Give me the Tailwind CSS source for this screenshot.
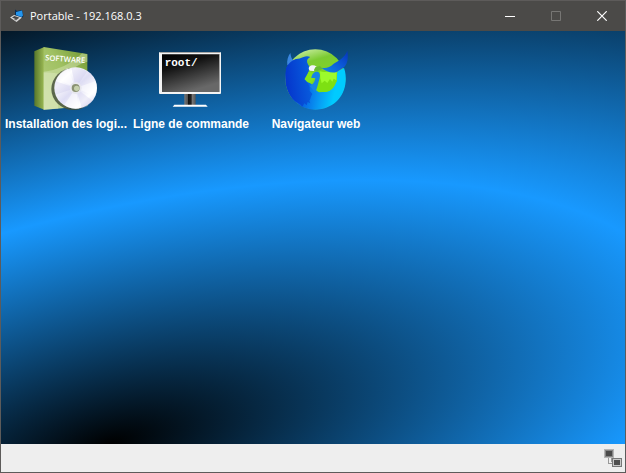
<!DOCTYPE html>
<html lang="fr">
<head>
    <meta charset="UTF-8">
    <meta name="viewport" content="width=device-width, initial-scale=1.0">
    <script src="https://cdn.jsdelivr.net/npm/@tailwindcss/browser@4"></script>
    <title>Portable - 192.168.0.3</title>
</head>
<body class="bg-[#4b4a48]">
    <div class="min-h-screen flex flex-col border border-[#5d5b5a]">
        <!-- Title bar -->
        <header class="h-[30px] flex items-center bg-[#4b4a48] text-white">
            <svg class="w-4 h-4 ml-2 shrink-0" viewBox="0 0 16 16" aria-hidden="true">
                <path d="M6 1.500L8 3l5-1 1.500 6-1.500 2-7-2.500z" fill="#0b2f55"/>
                <path d="M7 4l6-1.500 1 5L12.500 9 7 7z" fill="#2395ee"/>
                <path d="M1 9.500L5 7l8 2.500L7.500 14z" fill="#d7d7d7"/>
                <path d="M3 9.500L5.500 8l5 1.700L7.500 11.500z" fill="#454545"/>
                <path d="M5 11.500l2-1 1.500.7-1.500 1.200z" fill="#666"/>
            </svg>
            <h1 class="flex-1 ml-[5px] text-[11px] leading-4 font-['Open_Sans',sans-serif]">Portable - 192.168.0.3</h1>
            <button class="w-[46px] h-full flex items-center justify-center hover:bg-white/10" aria-label="Réduire">
                <svg class="w-[10px] h-[10px]" viewBox="0 0 10 10" shape-rendering="crispEdges"><path d="M0 5h10v1H0z" fill="#fff"/></svg>
            </button>
            <button class="w-[46px] h-full flex items-center justify-center" aria-label="Agrandir" disabled>
                <svg class="w-[10px] h-[10px]" viewBox="0 0 10 10"><path d="M.5.5h9v9h-9z" fill="none" stroke="#777674"/></svg>
            </button>
            <button class="w-[46px] h-full flex items-center justify-center hover:bg-red-600" aria-label="Fermer">
                <svg class="w-[10px] h-[10px]" viewBox="0 0 10 10"><path d="M.3.3l9.400 9.400M9.700.3L.3 9.700" stroke="#fff" stroke-width="1.200"/></svg>
            </button>
        </header>

        <!-- Desktop -->
        <main class="relative flex-1">
            <svg class="absolute inset-0 w-full h-full" viewBox="0 0 624 413" preserveAspectRatio="none" aria-hidden="true">
                <defs>
                    <radialGradient id="wallpaper" gradientUnits="userSpaceOnUse" cx="0" cy="0" r="1" gradientTransform="matrix(516 0 255 -264 109 413)" spreadMethod="reflect">
                        <stop offset="0" stop-color="#000"/>
                        <stop offset="1" stop-color="#1899ff"/>
                    </radialGradient>
                </defs>
                <path d="M0 0h624v413H0z" fill="url(#wallpaper)"/>
            </svg>

            <div class="relative flex flex-wrap gap-[5px] px-[5px] pt-[15px] font-['Liberation_Sans',Arial,sans-serif] text-[12px] leading-4 font-bold text-white">
                <button class="w-[120px] flex flex-col items-center gap-[6px] whitespace-nowrap">
                    <svg class="w-16 h-16" viewBox="102 30 192 192" aria-hidden="true">
                        <defs>
                            <linearGradient id="spine"><stop offset="0" stop-color="#58772a"/><stop offset="1" stop-color="#9dbb55"/></linearGradient>
                            <linearGradient id="front" x1="0" y1="1" x2="1" y2="0"><stop offset="0" stop-color="#b8cf83"/><stop offset=".55" stop-color="#a0c162"/><stop offset="1" stop-color="#6d942d"/></linearGradient>
                            <linearGradient id="disc" x1="0" y1="0" x2="1" y2="1"><stop offset="0" stop-color="#d7d5ee"/><stop offset=".25" stop-color="#fff"/><stop offset=".5" stop-color="#deddf4"/><stop offset=".75" stop-color="#fff"/><stop offset="1" stop-color="#cccae9"/></linearGradient>
                        </defs>
                        <path d="M103 46l30-13v188l-30-12z" fill="url(#spine)"/>
                        <path d="M131 33l131 21v156l-131 11z" fill="url(#front)"/>
                        <path d="M131 107c35-2 85-23 115-55l16 3v22c-45 12-75 45-84 92-5 20-5 38-3 49l-44 3z" fill="#dce9bd" opacity=".45"/>
                        <path d="M131 110c35-3 70 8 131 32v69l-131 10z" fill="#eef5db" opacity=".3"/>
                        <text transform="translate(135 73) rotate(4)" font-family="Open Sans" font-size="23" font-weight="600" fill="#fff">SOFTWARE</text>
                        <ellipse cx="220" cy="159" rx="66" ry="63" fill="#46513b" opacity=".85"/>
                        <ellipse cx="227" cy="156" rx="64" ry="62" fill="url(#disc)"/>
                        <path d="M227 156l-57-28c8-16 20-27 33-31zM227 156l60-21c5 18 4 32-2 46zM227 156l10 62c-18 2-33-2-44-11z" fill="#fff" opacity=".5"/>
                        <path d="M227 156l-13-61c19-3 35 2 47 12zM227 156l-61 20c-4-15-3-29 1-40zM227 156l51 38c-9 12-19 19-32 23z" fill="#bfbce7" opacity=".25"/>
                        <circle cx="227" cy="156" r="18" fill="#e7e7ee"/>
                        <circle cx="227" cy="156" r="12" fill="#8a9272"/>
                        <circle cx="230" cy="157" r="8" fill="#c5d0ab"/>
                    </svg>
                    <span>Installation des logi...</span>
                </button>

                <button class="w-[120px] flex flex-col items-center gap-[6px] whitespace-nowrap">
                    <svg class="w-16 h-16" viewBox="87 30 192 192" aria-hidden="true">
                        <defs>
                            <linearGradient id="screen" x1="0" y1="0" x2=".45" y2="1"><stop offset="0" stop-color="#000"/><stop offset=".35" stop-color="#111"/><stop offset="1" stop-color="#686868"/></linearGradient>
                            <linearGradient id="stand"><stop offset="0" stop-color="#777"/><stop offset=".28" stop-color="#555"/><stop offset=".35" stop-color="#111"/><stop offset=".6" stop-color="#222"/><stop offset=".7" stop-color="#777"/><stop offset="1" stop-color="#555"/></linearGradient>
                        </defs>
                        <rect x="87" y="48" width="186" height="126" rx="3" fill="#f4f4f4"/>
                        <path d="M90 48h180v3H90zM267 54h3v114h-3z" fill="#a5a5a5"/>
                        <path d="M96 55h171v113H96z" fill="url(#screen)"/>
                        <path d="M163 174h34v33h-34z" fill="url(#stand)"/>
                        <path d="M133 206h95l5 6H128z" fill="#fff"/>
                        <text x="104" y="90" font-family="Liberation Mono" font-size="33" font-weight="700" fill="#fff">root/</text>
                    </svg>
                    <span>Ligne de commande</span>
                </button>

                <button class="w-[120px] flex flex-col items-center gap-[6px] whitespace-nowrap">
                    <svg class="w-16 h-16" viewBox="0 0 192 192" aria-hidden="true">
                        <defs>
                            <linearGradient id="globe" x1="0" y1="0" x2=".3" y2="1"><stop offset="0" stop-color="#8fd045"/><stop offset=".12" stop-color="#b9e68a"/><stop offset=".3" stop-color="#7ccb32"/><stop offset="1" stop-color="#86e314"/></linearGradient>
                            <linearGradient id="fox" gradientUnits="userSpaceOnUse" x1="5" y1="80" x2="185" y2="115"><stop offset="0" stop-color="#0538cf"/><stop offset=".35" stop-color="#0760e2"/><stop offset=".65" stop-color="#08a0f5"/><stop offset=".85" stop-color="#00cbff"/></linearGradient>
                            <linearGradient id="head" gradientUnits="userSpaceOnUse" x1="5" y1="100" x2="85" y2="90"><stop offset="0" stop-color="#0536cc"/><stop offset="1" stop-color="#0860df"/></linearGradient>
                            <linearGradient id="tail" x1="0" y1="1" x2="1" y2="0"><stop offset="0" stop-color="#1187e8"/><stop offset=".5" stop-color="#0c5ddb"/><stop offset="1" stop-color="#0534b8"/></linearGradient>
                        </defs>
                        <circle cx="94" cy="100" r="90" fill="url(#globe)"/>
                        <!-- body -->
                        <path d="M7 66C16 46 30 40 44 39c8-1 14 1 20 6l12 16-2 16-8 14-4 9 8 8c12 4 22 12 29 27 10 4 30 4 38-1 10-8 17-14 20-28l1-28 22-12c5 12 6 28 5 40-3 50-42 85-91 85C44 190 4 150 4 98c0-12 1-22 3-32z" fill="url(#fox)"/>
                        <!-- ears and head -->
                        <path d="M10 58C8 44 12 30 19 21c2 12 4 20 11 22l-4 9z" fill="#3a86e0"/>
                        <path d="M7 66C14 48 28 40 42 38c8 0 10-4 17-5 6-3 14-3 20 0-10 5-12 12-7 23-4 6-2 12 2 18l-8 16-6 10 7 8c8 5 12 14 10 26l8 10c-6 8-4 14-9 20l3 8-8-4-3 10-7-6-6 10-7-8C14 158 0 120 7 66z" fill="url(#head)"/>
                        <!-- eye -->
                        <path d="M76 62c6-5 14-6 22 0l-5 5-3 8-12-1c-4-4-5-8-2-12z" fill="#f3f4fb"/>
                        <path d="M94 64l14-4 8 9-16 6-10-2z" fill="#67b932"/>
                        <!-- land -->
                        <path d="M98 78l14-4c16 5 32-3 48 0l-2 33c-8 6-6 14-14 22-8 6-12 8-20 8l-19 2-12-9 8-28z" fill="#7ee012"/>
                        <path d="M108 76c18 5 32-3 50 1l-1 26-8-5-4 9-7-8-8 12-8-7-9 8-4-16z" fill="#9cfb2c"/>
                        <path d="M62 99l7-10 5-12 18 4c2 12-2 22-12 30l-10-4z" fill="#86e51a"/>
                        <path d="M82 96c2-14 12-22 22-17 8 7 2 21-1 32-3 10-4 20-10 27l-16-18c8-4 15-10 17-24z" fill="#1684e6"/>
                        <!-- tail -->
                        <path d="M112 65c14 3 25-1 37-12 12-8 32-16 41-39 4 26 0 43-14 53l-18 11c-16 5-32-2-46-13z" fill="url(#tail)"/>
                    </svg>
                    <span>Navigateur web</span>
                </button>
            </div>
        </main>

        <!-- Status bar -->
        <footer class="h-7 flex items-center justify-end px-[3px] bg-[#eeeeee]">
            <svg class="w-[18px] h-[18px]" viewBox="0 0 18 18" shape-rendering="crispEdges" role="img" aria-label="Réseau">
                <path d="M4 9h1v5h3v-1H7V9h1v3h1v3H4z" fill="#999"/>
                <path d="M0 0h10v9H0z" fill="#b5b5b5"/>
                <path d="M1 1h8v7H1z" fill="#858585"/>
                <path d="M2 2h6v5H2z" fill="#4a4a4a"/>
                <path d="M8 9h10v9H8z" fill="#777"/>
                <path d="M9 10h8v7H9z" fill="#c8c8c8"/>
                <path d="M10 11h6v5h-6z" fill="#4f4f4f"/>
            </svg>
        </footer>
    </div>
</body>
</html>
